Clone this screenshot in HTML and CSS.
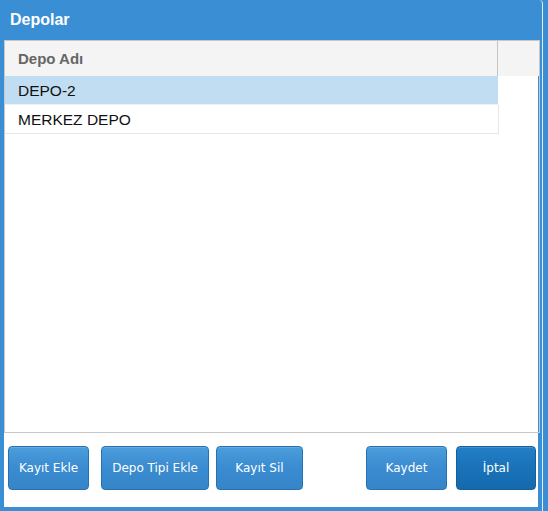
FILE: index.html
```html
<!DOCTYPE html>
<html>
<head>
<meta charset="utf-8">
<link rel="stylesheet" href="styles.css">
</head>
<body>
<div class="window">
  <div class="title">Depolar</div>
  <div class="content">
    <div class="grid">
      <div class="grid-head">
        <div class="col-main">Depo Adı</div>
        <div class="col-rest"></div>
      </div>
      <div class="rows">
        <div class="row selected">DEPO-2</div>
        <div class="row">MERKEZ DEPO</div>
      </div>
    </div>
    <div class="buttons">
      <div class="group">
        <button class="btn w-ekle">Kayıt Ekle</button>
        <button class="btn w-tip">Depo Tipi Ekle</button>
        <button class="btn w-sil">Kayıt Sil</button>
      </div>
      <div class="group right">
        <button class="btn w-kaydet">Kaydet</button>
        <button class="btn dark w-iptal">İptal</button>
      </div>
    </div>
  </div>
</div>
</body>
</html>
```
FILE: styles.css
```css
html, body {
  margin: 0;
  padding: 0;
}
body {
  background: #3a8fd4;
  width: 548px;
  height: 511px;
  overflow: hidden;
  font-family: "Liberation Sans", Arial, sans-serif;
}
.window {
  width: 543px;
  height: 511px;
  background: #3a8fd4;
  border-right: 1px solid #e4eef8;
  border-top-right-radius: 4px;
  display: flex;
  flex-direction: column;
  box-sizing: border-box;
}
.title {
  height: 40px;
  line-height: 40px;
  padding-left: 10px;
  color: #fff;
  font-weight: bold;
  font-size: 16px;
}
.content {
  margin: 0 4px 4px 4px;
  flex: 1;
  background: #fff;
  display: flex;
  flex-direction: column;
}
.grid {
  height: 393px;
  border: 1px solid #c8c8c8;
  box-sizing: border-box;
  width: 536px;
}
.grid-head {
  height: 35px;
  background: #f4f4f4;
  display: flex;
}
.col-main {
  width: 493px;
  border-right: 1px solid #c4c4c4;
  box-sizing: border-box;
  padding-left: 13px;
  line-height: 36px;
  font-weight: bold;
  font-size: 15px;
  color: #666;
}
.col-rest {
  flex: 1;
}
.rows {
  width: 494px;
}
.row {
  height: 29px;
  line-height: 29px;
  box-sizing: border-box;
  border-bottom: 1px solid #e6e6e6;
  border-right: 1px solid #e6e6e6;
  padding-left: 13px;
  font-size: 15.5px;
  color: #111;
}
.row.selected {
  background: #c0ddf2;
  border-bottom-color: #e8f2fa;
  border-right-color: #fff;
}
.buttons {
  display: flex;
  justify-content: space-between;
  padding: 13px 2px 0 4px;
}
.group {
  display: flex;
  gap: 7px;
}
.group.right {
  gap: 9px;
}
.w-ekle { margin-right: 5px; }
.btn {
  height: 44px;
  border: 1px solid #2372b6;
  border-radius: 4px;
  background: linear-gradient(#4b9ddb, #3a8bd0 50%, #3785c9);
  color: #fff;
  font-family: "DejaVu Sans", Verdana, sans-serif;
  font-size: 12px;
  padding: 0;
  box-shadow: inset 0 1px 0 rgba(255,255,255,0.15);
}
.btn.dark {
  background: linear-gradient(#237fc6, #1a72b8 50%, #156aae);
  border-color: #145f9e;
}
.w-ekle { width: 81px; }
.w-tip { width: 108px; }
.w-sil { width: 87px; }
.w-kaydet { width: 81px; }
.w-iptal { width: 80px; }
```
